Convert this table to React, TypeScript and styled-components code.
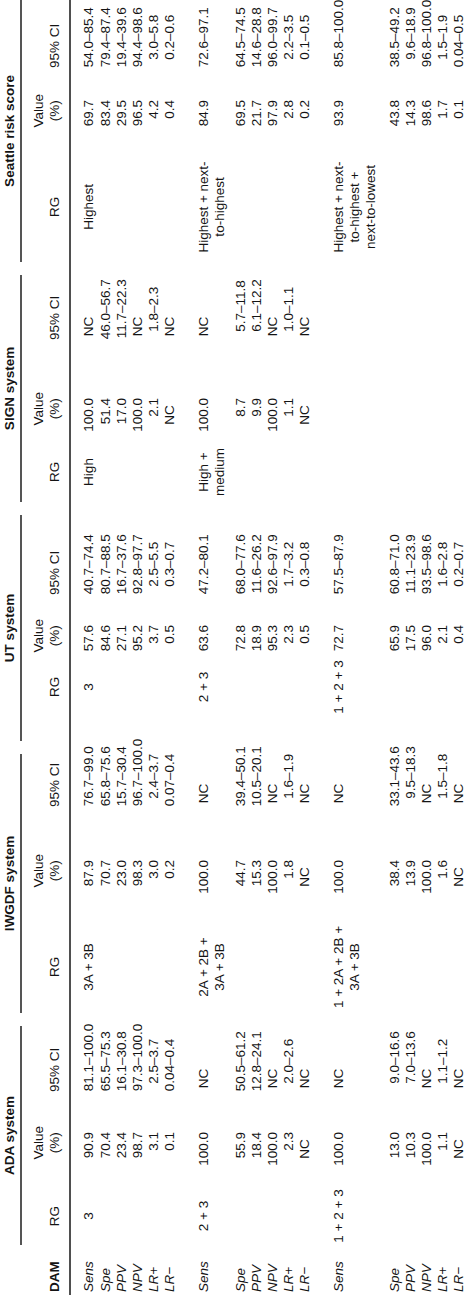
import React from "react";
import styled, { createGlobalStyle } from "styled-components";

const Global = createGlobalStyle`
  html, body { margin: 0; padding: 0; background: #ffffff; }
  body { font-family: "Liberation Sans", Arial, Helvetica, sans-serif; }
`;

const Page = styled.div`
  width: 474px;
  height: 1295px;
  overflow: hidden;
  background: #ffffff;
`;

const Rotor = styled.div`
  width: 1295px;
  height: 474px;
  transform-origin: 0 0;
  transform: translateY(1295px) rotate(-90deg);
`;

const Table = styled.table`
  width: 1295px;
  table-layout: fixed;
  border-collapse: separate;
  border-spacing: 0;
  font-family: "Liberation Sans", Arial, Helvetica, sans-serif;
  font-size: 13.5px;
  line-height: 16px;
  color: #141414;
`;

const GroupTh = styled.th`
  padding: 2px 0 0 0;
  vertical-align: top;
  text-align: center;
  font-weight: bold;
  white-space: nowrap;
`;

const GroupTitle = styled.div<{ $last: boolean }>`
  padding-bottom: 2px;
  margin-right: ${(p) => (p.$last ? 0 : 13)}px;
  border-bottom: 2px solid #555555;
`;

const SubTh = styled.th<{ $align: string; $pl: number; $pr: number; $bold?: boolean }>`
  padding: 9px ${(p) => p.$pr}px 6px ${(p) => p.$pl}px;
  vertical-align: bottom;
  text-align: ${(p) => p.$align};
  font-weight: ${(p) => (p.$bold ? "bold" : "normal")};
  border-bottom: 2px solid #4f4f4f;
  white-space: nowrap;
`;

const ValHead = styled.span`
  display: inline-block;
  text-align: center;
`;

const Td = styled.td<{ $align: string; $pl: number; $pr: number; $pt: number; $pb: number }>`
  padding: ${(p) => p.$pt}px ${(p) => p.$pr}px ${(p) => p.$pb}px ${(p) => p.$pl}px;
  vertical-align: top;
  text-align: ${(p) => p.$align};
  white-space: nowrap;
`;

const Measure = styled.span`
  font-style: italic;
`;

const ValBox = styled.span<{ $nc: boolean }>`
  display: inline-block;
  width: 34px;
  text-align: ${(p) => (p.$nc ? "center" : "right")};
`;

const CiLo = styled.span`
  display: inline-block;
  width: 27px;
  text-align: right;
`;

const CiNc = styled.span`
  display: inline-block;
  width: 27px;
  text-align: center;
`;

type Kind = "dam" | "rg" | "val" | "ci";
interface Col {
  w: number;
  kind: Kind;
  pl: number;
  pr: number;
}

const COLS: Col[] = [
  { w: 50, kind: "dam", pl: 3, pr: 0 },
  { w: 60, kind: "rg", pl: 0, pr: 2 },
  { w: 60, kind: "val", pl: 0, pr: 7 },
  { w: 112, kind: "ci", pl: 33, pr: 0 },
  { w: 96, kind: "rg", pl: 0, pr: 4 },
  { w: 64, kind: "val", pl: 0, pr: 7 },
  { w: 112, kind: "ci", pl: 46, pr: 0 },
  { w: 82, kind: "rg", pl: 26, pr: 0 },
  { w: 40, kind: "val", pl: 0, pr: 6 },
  { w: 117, kind: "ci", pl: 24, pr: 0 },
  { w: 62, kind: "rg", pl: 0, pr: 2 },
  { w: 50, kind: "val", pl: 0, pr: 8 },
  { w: 128, kind: "ci", pl: 50, pr: 0 },
  { w: 110, kind: "rg", pl: 0, pr: 0 },
  { w: 59, kind: "val", pl: 0, pr: 7 },
  { w: 93, kind: "ci", pl: 25, pr: 0 },
];

const GROUPS = ["ADA system", "IWGDF system", "UT system", "SIGN system", "Seattle risk score"];

const G1: string[][] = [
  ["Sens", "3", "90.9", "81.1–100.0", "3A + 3B", "87.9", "76.7–99.0", "3", "57.6", "40.7–74.4", "High", "100.0", "NC", "Highest", "69.7", "54.0–85.4"],
  ["Spe", "", "70.4", "65.5–75.3", "", "70.7", "65.8–75.6", "", "84.6", "80.7–88.5", "", "51.4", "46.0–56.7", "", "83.4", "79.4–87.4"],
  ["PPV", "", "23.4", "16.1–30.8", "", "23.0", "15.7–30.4", "", "27.1", "16.7–37.6", "", "17.0", "11.7–22.3", "", "29.5", "19.4–39.6"],
  ["NPV", "", "98.7", "97.3–100.0", "", "98.3", "96.7–100.0", "", "95.2", "92.8–97.7", "", "100.0", "NC", "", "96.5", "94.4–98.6"],
  ["LR+", "", "3.1", "2.5–3.7", "", "3.0", "2.4–3.7", "", "3.7", "2.5–5.5", "", "2.1", "1.8–2.3", "", "4.2", "3.0–5.8"],
  ["LR−", "", "0.1", "0.04–0.4", "", "0.2", "0.07–0.4", "", "0.5", "0.3–0.7", "", "NC", "NC", "", "0.4", "0.2–0.6"],
];

const G2: string[][] = [
  ["Sens", "2 + 3", "100.0", "NC", "2A + 2B +\n3A + 3B", "100.0", "NC", "2 + 3", "63.6", "47.2–80.1", "High +\nmedium", "100.0", "NC", "Highest + next-\nto-highest", "84.9", "72.6–97.1"],
  ["Spe", "", "55.9", "50.5–61.2", "", "44.7", "39.4–50.1", "", "72.8", "68.0–77.6", "", "8.7", "5.7–11.8", "", "69.5", "64.5–74.5"],
  ["PPV", "", "18.4", "12.8–24.1", "", "15.3", "10.5–20.1", "", "18.9", "11.6–26.2", "", "9.9", "6.1–12.2", "", "21.7", "14.6–28.8"],
  ["NPV", "", "100.0", "NC", "", "100.0", "NC", "", "95.3", "92.6–97.9", "", "100.0", "NC", "", "97.9", "96.0–99.7"],
  ["LR+", "", "2.3", "2.0–2.6", "", "1.8", "1.6–1.9", "", "2.3", "1.7–3.2", "", "1.1", "1.0–1.1", "", "2.8", "2.2–3.5"],
  ["LR−", "", "NC", "NC", "", "NC", "NC", "", "0.5", "0.3–0.8", "", "NC", "NC", "", "0.2", "0.1–0.5"],
];

const G3: string[][] = [
  ["Sens", "1 + 2 + 3", "100.0", "NC", "1 + 2A + 2B +\n3A + 3B", "100.0", "NC", "1 + 2 + 3", "72.7", "57.5–87.9", "", "", "", "Highest + next-\nto-highest +\nnext-to-lowest", "93.9", "85.8–100.0"],
  ["Spe", "", "13.0", "9.0–16.6", "", "38.4", "33.1–43.6", "", "65.9", "60.8–71.0", "", "", "", "", "43.8", "38.5–49.2"],
  ["PPV", "", "10.3", "7.0–13.6", "", "13.9", "9.5–18.3", "", "17.5", "11.1–23.9", "", "", "", "", "14.3", "9.6–18.9"],
  ["NPV", "", "100.0", "NC", "", "100.0", "NC", "", "96.0", "93.5–98.6", "", "", "", "", "98.6", "96.8–100.0"],
  ["LR+", "", "1.1", "1.1–1.2", "", "1.6", "1.5–1.8", "", "2.1", "1.6–2.8", "", "", "", "", "1.7", "1.5–1.9"],
  ["LR−", "", "NC", "NC", "", "NC", "NC", "", "0.4", "0.2–0.7", "", "", "", "", "0.1", "0.04–0.5"],
];

const BLOCKS: { rows: string[][]; sensPb: number }[] = [
  { rows: G1, sensPb: 1 },
  { rows: G2, sensPb: 5 },
  { rows: G3, sensPb: 8 },
];

function alignOf(kind: Kind): string {
  if (kind === "rg") return "center";
  if (kind === "val") return "right";
  return "left";
}

function Lines({ text }: { text: string }) {
  const parts = text.split("\n");
  return (
    <>
      {parts.map((p, i) => (
        <React.Fragment key={i}>
          {i > 0 && <br />}
          {p}
        </React.Fragment>
      ))}
    </>
  );
}

function CellContent({ kind, text }: { kind: Kind; text: string }) {
  if (!text) return null;
  if (kind === "dam") return <Measure>{text}</Measure>;
  if (kind === "val") return <ValBox $nc={text === "NC"}>{text}</ValBox>;
  if (kind === "ci") {
    if (text === "NC") return <CiNc>NC</CiNc>;
    const [lo, hi] = text.split("–");
    return (
      <>
        <CiLo>{lo}</CiLo>–{hi}
      </>
    );
  }
  return <Lines text={text} />;
}

function subHead(kind: Kind) {
  if (kind === "rg") return "RG";
  if (kind === "ci") return "95% CI";
  return (
    <ValHead>
      Value
      <br />
      (%)
    </ValHead>
  );
}

export default function App() {
  return (
    <Page>
      <Global />
      <Rotor>
        <Table>
          <colgroup>
            {COLS.map((c, i) => (
              <col key={i} style={{ width: c.w }} />
            ))}
          </colgroup>
          <thead>
            <tr>
              <SubTh rowSpan={2} $align="left" $pl={3} $pr={0} $bold>
                DAM
              </SubTh>
              {GROUPS.map((g, i) => (
                <GroupTh key={g} colSpan={3}>
                  <GroupTitle $last={i === GROUPS.length - 1}>{g}</GroupTitle>
                </GroupTh>
              ))}
            </tr>
            <tr>
              {COLS.slice(1).map((c, i) => (
                <SubTh
                  key={i}
                  $align={alignOf(c.kind)}
                  $pl={c.pl}
                  $pr={c.kind === "val" ? Math.max(0, c.pr - 6) : c.pr}
                >
                  {subHead(c.kind)}
                </SubTh>
              ))}
            </tr>
          </thead>
          <tbody>
            {BLOCKS.map((b, bi) =>
              b.rows.map((r, ri) => {
                const pt = ri === 0 ? 10 : 0;
                const pb = ri === 0 ? b.sensPb : ri === b.rows.length - 1 ? 8 : 0;
                return (
                  <tr key={`${bi}-${ri}`}>
                    {r.map((t, ci) => {
                      const c = COLS[ci];
                      return (
                        <Td key={ci} $align={alignOf(c.kind)} $pl={c.pl} $pr={c.pr} $pt={pt} $pb={pb}>
                          <CellContent kind={c.kind} text={t} />
                        </Td>
                      );
                    })}
                  </tr>
                );
              })
            )}
          </tbody>
        </Table>
      </Rotor>
    </Page>
  );
}
